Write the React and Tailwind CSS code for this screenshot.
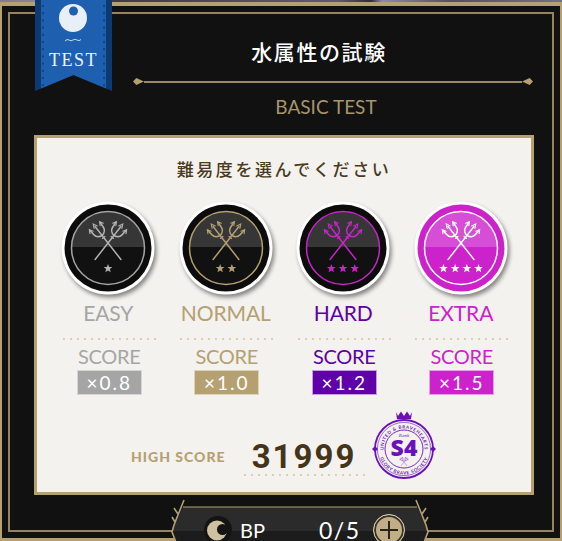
const LATO = { fontFamily: '"Lato", "Noto Sans CJK JP", sans-serif' };

function Star({ x, y, r, fill }) {
  const pts = [];
  for (let i = 0; i < 10; i++) {
    const a = -Math.PI / 2 + (i * Math.PI) / 5;
    const d = i % 2 === 0 ? r : r * 0.42;
    pts.push(`${(x + d * Math.cos(a)).toFixed(2)},${(y + d * Math.sin(a)).toFixed(2)}`);
  }
  return <polygon points={pts.join(" ")} fill={fill} />;
}

function Trident({ angle, color }) {
  return (
    <g transform={`rotate(${angle})`} stroke={color} fill="none" strokeLinecap="round">
      <path d="M0 21 L0 -21" strokeWidth="1.4" />
      <path d="M-6.5 -21 L-6 -15 Q-5.5 -10.5 0 -9.5 Q5.5 -10.5 6 -15 L6.5 -21" strokeWidth="1.5" />
      <path d="M-8.5 -18.5 L-6.5 -22 L-4.5 -18.5 M-2 -20 L0 -24 L2 -20 M4.5 -18.5 L6.5 -22 L8.5 -18.5" strokeWidth="1.1" />
      <path d="M-1.6 -7 L1.6 -7" strokeWidth="1.2" />
    </g>
  );
}

function Badge({ id, outer, top, bottom, ring, icon, stars }) {
  const n = stars;
  const start = 50 - ((n - 1) * 11.7) / 2;
  return (
    <svg width="100" height="100" viewBox="0 0 100 100" className="drop-shadow-[2px_3px_2px_rgba(0,0,0,0.45)]">
      <defs>
        <clipPath id={id}>
          <rect x="0" y="0" width="100" height="49" />
        </clipPath>
      </defs>
      <circle cx="50" cy="50" r="46.5" fill="#ffffff" />
      <circle cx="50" cy="50" r="43.5" fill={outer} />
      <circle cx="50" cy="50" r="36" fill={bottom} />
      <circle cx="50" cy="50" r="36" fill={top} clipPath={`url(#${id})`} />
      <circle cx="50" cy="50" r="36.5" fill="none" stroke={ring} strokeWidth="1.5" />
      <g transform="translate(50 45)">
        <Trident angle={-38} color={icon} />
        <Trident angle={38} color={icon} />
      </g>
      {Array.from({ length: n }).map((_, i) => (
        <Star key={i} x={start + i * 11.7} y={70.5} r={4.6} fill={icon} />
      ))}
    </svg>
  );
}

function Dots({ count, color = "#d8cfb4" }) {
  return (
    <div className="flex gap-[5px]">
      {Array.from({ length: count }).map((_, i) => (
        <span key={i} className="block w-[2px] h-[2px]" style={{ backgroundColor: color }} />
      ))}
    </div>
  );
}

const LEVELS = [
  { id: "easy", name: "EASY", mult: "×0.8", text: "text-[#a5a5a5]", box: "bg-[#a5a5a5] border-[#d6d6d6]", outer: "#0c0c0c", top: "#363636", bottom: "#111111", ring: "#a5a5a5", icon: "#b4b4b4", stars: 1 },
  { id: "normal", name: "NORMAL", mult: "×1.0", text: "text-[#b5a071]", box: "bg-[#b5a071] border-[#dcd2b8]", outer: "#0c0c0c", top: "#363636", bottom: "#111111", ring: "#b5a071", icon: "#b5a071", stars: 2 },
  { id: "hard", name: "HARD", mult: "×1.2", text: "text-[#5f00a8]", box: "bg-[#5f00a8] border-[#c79be0]", outer: "#0c0c0c", top: "#363636", bottom: "#111111", ring: "#c626c6", icon: "#c626c6", stars: 3 },
  { id: "extra", name: "EXTRA", mult: "×1.5", text: "text-[#cc22cc]", box: "bg-[#cc22cc] border-[#e6a0e6]", outer: "#cc22cc", top: "#d64ed6", bottom: "#cc22cc", ring: "#ffffff", icon: "#ffffff", stars: 4 },
];

function Level({ l }) {
  return (
    <div className="flex flex-col items-center">
      <Badge id={l.id} outer={l.outer} top={l.top} bottom={l.bottom} ring={l.ring} icon={l.icon} stars={l.stars} />
      <div className={`${l.text} text-[21px] leading-[26px] mt-[2px] tracking-[-0.1px]`} style={LATO}>{l.name}</div>
      <div className="mt-[12px] ml-[2px]"><Dots count={14} /></div>
      <div className={`${l.text} text-[20px] leading-[24px] mt-[4px] ml-[2px] tracking-[-0.3px]`} style={LATO}>SCORE</div>
      <div className={`${l.box} border w-[65px] h-[25px] mt-[2px] ml-[2px] flex items-center justify-center text-white text-[19px] leading-none tracking-[2px]`} style={LATO}>{l.mult}</div>
    </div>
  );
}

function Stamp() {
  const c = "#6a12b8";
  return (
    <svg width="66" height="72" viewBox="0 0 66 72">
      <defs>
        <path id="stamp-top" d="M12.5 40 A20.5 20.5 0 0 1 53.5 40" />
        <path id="stamp-bottom" d="M7.5 40 A25.5 25.5 0 0 0 58.5 40" />
      </defs>
      <path d="M25 3 L27 7 L30 2.5 L33 7 L36 2.5 L39 7 L41 3 L40 10 L26 10 Z" fill={c} />
      <circle cx="33" cy="40" r="29" fill="none" stroke={c} strokeWidth="1.8" />
      <circle cx="33" cy="40" r="26.6" fill="none" stroke={c} strokeWidth="0.6" />
      <circle cx="33" cy="40" r="19" fill="none" stroke={c} strokeWidth="0.9" />
      <path d="M1 40 L4 37 L7 40 L4 43 Z M59 40 L62 37 L65 40 L62 43 Z" fill={c} />
      <text fontSize="4.5" fontWeight="700" fill={c} letterSpacing="0.6" fontFamily="Lato, sans-serif">
        <textPath href="#stamp-top" startOffset="50%" textAnchor="middle">UNITED &amp; BRAVEHEARTS</textPath>
      </text>
      <text fontSize="4.5" fontWeight="700" fill={c} letterSpacing="0.6" fontFamily="Lato, sans-serif">
        <textPath href="#stamp-bottom" startOffset="50%" textAnchor="middle">GLORY BRAVE SOCIETY</textPath>
      </text>
      <text x="33" y="28" fontSize="5" fontStyle="italic" textAnchor="middle" fill={c} fontFamily="'Liberation Serif', serif">Rank</text>
      <text x="33" y="47" fontSize="23" fontWeight="800" textAnchor="middle" fill={c} fontFamily="'Open Sans', sans-serif">S4</text>
      <g transform="translate(33 53) scale(0.22)">
        <Trident angle={-38} color={c} />
        <Trident angle={38} color={c} />
      </g>
    </svg>
  );
}

function Ribbon() {
  const stitches = [];
  for (let y = 5; y < 88; y += 7.2) stitches.push(y);
  return (
    <svg width="77" height="92" viewBox="0 0 77 92">
      <path d="M0 0 H77 V91 L38.5 75 L0 91 Z" fill="#0d3a70" />
      <path d="M6 0 H71 V88.5 L38.5 75 L6 88.5 Z" fill="#1f5fb0" />
      {stitches.map((y) => (
        <g key={y} fill="#0f4288">
          <rect x="7" y={y} width="2" height="2" />
          <rect x="68" y={y} width="2" height="2" />
        </g>
      ))}
      <circle cx="38" cy="18" r="14" fill="#e8eff8" />
      <circle cx="38.5" cy="11" r="4.5" fill="#1f5fb0" />
      <path d="M30 41 Q32 38.5 34 40 T38 40 T42 40 T46 39.5" fill="none" stroke="#c4d6ee" strokeWidth="1" />
      <text x="38.5" y="66" textAnchor="middle" fontSize="18" letterSpacing="1.5" fill="#ecf2fa" fontFamily="'Liberation Serif', serif">TEST</text>
    </svg>
  );
}

function BarFrame() {
  const gold = "#b5a071";
  return (
    <svg width="280" height="44" viewBox="0 0 280 44" className="absolute inset-0">
      <polygon points="23,10 257,10 268,35 265,44 15,44 12,35" fill="#1c1c1c" />
      <polygon points="23,10 257,10 268,34 12,34" fill="#2b2b2b" />
      <path d="M23 10 H257" stroke={gold} strokeWidth="1.2" />
      <g fill="none" stroke={gold} strokeWidth="1.6">
        <path d="M24 3 L14 28 L12 35 L15.5 44" />
        <path d="M18 17 L14 11" />
        <path d="M15 25 L12 20" />
        <path d="M256 3 L266 28 L268 35 L264.5 44" />
        <path d="M262 17 L266 11" />
        <path d="M265 25 L268 20" />
      </g>
    </svg>
  );
}

function BpBar() {
  return (
    <div className="absolute left-[160px] top-[497px] w-[280px] h-[44px]">
      <BarFrame />
      <div className="relative flex items-center h-[26px] mt-[20px] pl-[44px]">
        <svg width="28" height="28" viewBox="0 0 28 28" className="shrink-0">
          <circle cx="14" cy="14" r="14" fill="#141414" />
          <circle cx="13" cy="14.5" r="10" fill="#cfc1a0" />
          <circle cx="18.5" cy="13.5" r="5.5" fill="#141414" />
        </svg>
        <span className="ml-[8px] w-[79px] text-white text-[20px] leading-[20px]" style={LATO}>BP</span>
        <span className="text-white text-[23px] leading-[20px] tracking-[1.5px] w-[54px]" style={LATO}>0/5</span>
        <span className="shrink-0 w-[32px] h-[32px] rounded-full border border-[#d9ccae] bg-[#bfae86] shadow-[inset_0_0_0_2px_#3a3327] flex items-center justify-center">
          <svg width="20" height="20" viewBox="0 0 20 20"><path d="M10 1 V19 M1 10 H19" stroke="#2a2418" strokeWidth="2" /></svg>
        </span>
      </div>
    </div>
  );
}

export default function App() {
  return (
    <div className="relative w-[562px] h-[541px] overflow-hidden pt-[2px] bg-[linear-gradient(90deg,#7d7d8c_0%,#8c8c98_10%,#3d3d46_20%,#5c5c70_60%,#2e2e38_66%,#8a8ab0_68%,#50506a_80%,#70708a_100%)]">
      <div className="h-[539px] border-t-[4px] border-x-[2px] border-b-[3px] border-[#b5a071] bg-[#111111] p-[6px]">
        <div className="h-full border-2 border-[#94855f] flex flex-col items-center">
          <h1 className="mt-[21px] ml-[76px] text-[21px] leading-[32px] font-medium text-white tracking-[1.6px]" style={{ fontFamily: '"Noto Sans CJK JP", sans-serif' }}>水属性の試験</h1>
          <div className="mt-[11px] ml-[104px] flex items-center w-[400px]">
            <span className="block w-[11px] h-[7px] bg-[#b5a071] [clip-path:polygon(0_50%,30%_0,100%_50%,30%_100%)]" />
            <div className="flex-1 h-[2px] bg-[#9a8a63]" />
            <span className="block w-[11px] h-[7px] bg-[#b5a071] [clip-path:polygon(100%_50%,70%_0,0_50%,70%_100%)]" />
          </div>
          <div className="mt-[9px] ml-[90px] text-[19px] leading-[26px] text-[#a8966a]" style={LATO}>BASIC TEST</div>
          <div className="mt-[15px] ml-[6px] w-[500px] h-[360px] border-[3px] border-[#b5a071] bg-[#f3f2ee] flex flex-col items-center">
            <div className="mt-[19px] text-[17px] leading-[24px] font-medium text-[#4a3a20] tracking-[2.6px]" style={{ fontFamily: '"Noto Sans CJK JP", sans-serif' }}>難易度を選んでください</div>
            <div className="grid grid-cols-4 w-[470px] justify-items-center mt-[17px] ml-[1px]">
              {LEVELS.map((l) => <Level key={l.id} l={l} />)}
            </div>
            <div className="flex items-start mt-[14px]">
              <div className="mt-[38px] text-[14px] leading-[20px] font-black tracking-[1px] text-[#b5a071] w-[110px]" style={LATO}>HIGH SCORE</div>
              <div className="mt-[33px] flex flex-col items-center w-[126px]">
                <div className="text-[33px] leading-[30px] font-bold text-[#46341a] tracking-[2px]" style={{ fontFamily: '"Roboto", sans-serif' }}>31999</div>
                <div className="mt-[2px]"><Dots count={18} /></div>
              </div>
              <div className="ml-[4px]"><Stamp /></div>
            </div>
          </div>
        </div>
      </div>
      <div className="absolute left-[35px] top-0"><Ribbon /></div>
      <BpBar />
    </div>
  );
}
